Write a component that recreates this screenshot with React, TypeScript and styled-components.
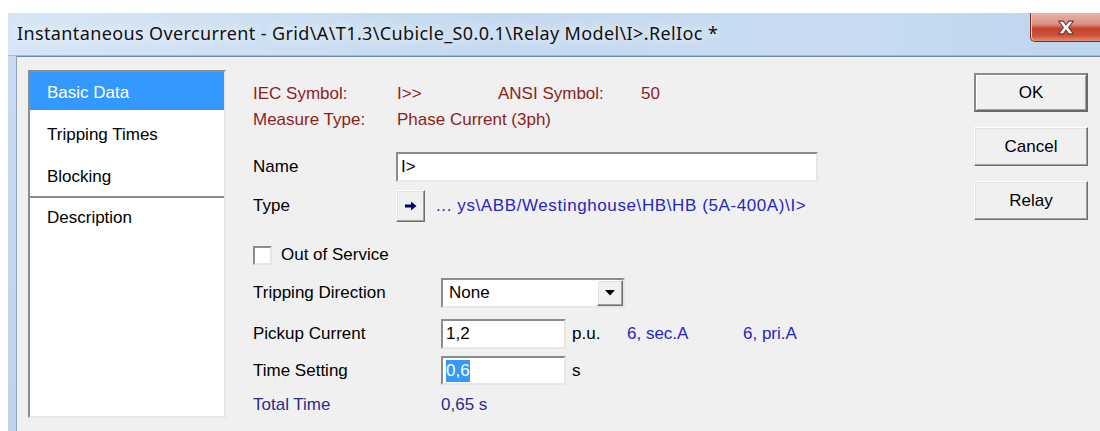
import React from 'react';
import styled, { createGlobalStyle, css } from 'styled-components';

const GlobalStyle = createGlobalStyle`
  html, body {
    margin: 0;
    background: #ffffff;
    overflow: hidden;
  }
  body {
    font-family: "Liberation Sans", Arial, sans-serif;
    font-size: 17px;
    color: #000;
  }
`;

const sunken = css`
  box-sizing: border-box;
  border: 2px solid;
  border-color: #8c8c8c #e6e6e6 #e6e6e6 #8c8c8c;
  background: #fff;
`;

const raised = css`
  box-sizing: border-box;
  border: 1px solid;
  border-color: #ffffff #6e6e6e #6e6e6e #ffffff;
  box-shadow: inset -1px -1px 0 #a0a0a0, inset 1px 1px 0 #e3e3e3;
  background: #f0f0f0;
`;

const Window = styled.div`
  margin: 13px 0 0 8px;
  height: 418px;
  display: flex;
  flex-direction: column;
  background: linear-gradient(180deg, #c9ddf2, #bcd4ee);
`;

const TitleBar = styled.div`
  box-sizing: border-box;
  height: 43px;
  display: flex;
  align-items: flex-start;
  background: linear-gradient(90deg, #d7e6f6 0%, #c4d9f0 45%, #c9dcf2 75%, #bed5ee 100%);
  border-bottom: 1px solid #a3b9d2;
`;

const Title = styled.div`
  padding: 8px 0 0 9px;
  font-family: "Noto Sans", "Open Sans", sans-serif;
  font-size: 18px;
  letter-spacing: 0.38px;
  line-height: 24px;
  color: #111;
  white-space: nowrap;
  text-shadow: 0 0 8px #eef4fb, 0 0 12px #eef4fb;
`;

const CloseButton = styled.div`
  box-sizing: border-box;
  margin-left: auto;
  width: 70px;
  height: 29px;
  display: flex;
  align-items: center;
  justify-content: center;
  border: 1px solid #7a2d22;
  border-top: none;
  border-right: none;
  border-bottom-left-radius: 5px;
  background: linear-gradient(180deg, #eab4a8 0%, #dc9282 40%, #c5432c 55%, #cc5138 80%, #e08f78 100%);
  box-shadow: inset 1px 0 0 #f2c8bd;
`;

const Client = styled.div`
  flex: 1;
  margin-left: 8px;
  background: #f0f0f0;
  border-top: 1px solid #7089a6;
  border-left: 1px solid #8fa4bc;
  padding: 13px 12px 0 11px;
  display: grid;
  grid-template-columns: 198px 1fr 114px;
  align-items: start;
`;

const Tree = styled.div`
  ${sunken};
  height: 348px;
  display: flex;
  flex-direction: column;
`;

const TreeGroup = styled.div<{ $split?: boolean }>`
  height: ${p => (p.$split ? 'auto' : '124px')};
  overflow: hidden;
  ${p => p.$split && css`border-top: 2px solid #8c8c8c;`}
`;

const TreeItem = styled.div<{ $selected?: boolean; $h?: number }>`
  height: ${p => p.$h ?? 42}px;
  display: flex;
  align-items: center;
  padding-left: 17px;
  color: ${p => (p.$selected ? '#fff' : '#000')};
  background: ${p => (p.$selected ? 'linear-gradient(#3399ff 0 38px, transparent 38px)' : 'none')};
`;

const Form = styled.div`
  margin: 11px 0 0 27px;
  display: flex;
  flex-direction: column;
`;

const Row = styled.div<{ $h: number; $gap?: number }>`
  height: ${p => p.$h}px;
  margin-top: ${p => p.$gap ?? 0}px;
  display: flex;
  align-items: center;
  white-space: nowrap;
`;

const Cell = styled.span<{ $w?: number; $pad?: number; $tone?: 'info' | 'link' | 'total' }>`
  box-sizing: border-box;
  ${p => p.$w && css`width: ${p.$w}px; flex: none;`}
  padding-left: ${p => p.$pad ?? 0}px;
  color: ${p =>
    p.$tone === 'info' ? '#8e1d1d' : p.$tone === 'link' ? '#2626c2' : p.$tone === 'total' ? '#2b2b8c' : '#000'};
`;

const PathLink = styled.span`
  color: #2626c2;
  letter-spacing: 0.6px;
`;

const TextBox = styled.div<{ $w: number; $h?: number }>`
  ${sunken};
  width: ${p => p.$w}px;
  height: ${p => p.$h ?? 30}px;
  padding-left: 3px;
  display: flex;
  align-items: center;
`;

const Selected = styled.span`
  background: #3399ff;
  color: #fff;
  line-height: 22px;
`;

const ArrowButton = styled.div`
  ${raised};
  width: 29px;
  height: 32px;
  display: flex;
  align-items: center;
  justify-content: center;
  margin-right: 11px;
`;

const Check = styled.div`
  ${sunken};
  width: 19px;
  height: 19px;
  margin-right: 9px;
`;

const Select = styled.div`
  ${sunken};
  width: 184px;
  height: 30px;
  display: flex;
  align-items: center;
  padding-left: 6px;
  justify-content: space-between;
`;

const DropButton = styled.div`
  ${raised};
  width: 26px;
  height: 26px;
  display: flex;
  align-items: center;
  justify-content: center;
`;

const Buttons = styled.div`
  margin-top: 3px;
  display: flex;
  flex-direction: column;
  gap: 15px;
`;

const Button = styled.div<{ $default?: boolean }>`
  ${raised};
  height: 39px;
  display: flex;
  align-items: center;
  justify-content: center;
  ${p =>
    p.$default &&
    css`
      border: 2px solid #6a6a6a;
      border-top-color: #8a8a8a;
      border-left-color: #8a8a8a;
      box-shadow: inset 1px 1px 0 #fff, inset -1px -1px 0 #a0a0a0;
    `}
`;

const CloseGlyph = () => (
  <svg width="22" height="17" viewBox="0 0 20 16">
    <path
      d="M3 2h4.5L10 5.6 12.5 2H17l-4.6 6L17 14h-4.5L10 10.4 7.5 14H3l4.6-6z"
      fill="#ffffff"
      stroke="#6a3a33"
      strokeWidth="1"
      strokeLinejoin="round"
    />
  </svg>
);

const RightArrow = () => (
  <svg width="12" height="10" viewBox="0 0 12 10">
    <path d="M0 3.5h6V0.5L11.5 5 6 9.5V6.5H0z" fill="#00006e" />
  </svg>
);

const DownTriangle = () => (
  <svg width="10" height="6" viewBox="0 0 10 6">
    <path d="M0 0h10L5 5.5z" fill="#000" />
  </svg>
);

export default function App() {
  return (
    <>
      <GlobalStyle />
      <Window>
        <TitleBar>
          <Title>Instantaneous Overcurrent - Grid\A\T1.3\Cubicle_S0.0.1\Relay Model\I&gt;.RelIoc *</Title>
          <CloseButton>
            <CloseGlyph />
          </CloseButton>
        </TitleBar>
        <Client>
          <Tree>
            <TreeGroup>
              <TreeItem $selected>Basic Data</TreeItem>
              <TreeItem>Tripping Times</TreeItem>
              <TreeItem>Blocking</TreeItem>
            </TreeGroup>
            <TreeGroup $split>
              <TreeItem $h={40}>Description</TreeItem>
            </TreeGroup>
          </Tree>

          <Form>
            <Row $h={26}>
              <Cell $w={144} $tone="info">IEC Symbol:</Cell>
              <Cell $w={101} $tone="info">I&gt;&gt;</Cell>
              <Cell $w={143} $tone="info">ANSI Symbol:</Cell>
              <Cell $tone="info">50</Cell>
            </Row>
            <Row $h={26}>
              <Cell $w={144} $tone="info">Measure Type:</Cell>
              <Cell $tone="info">Phase Current (3ph)</Cell>
            </Row>
            <Row $h={30} $gap={19}>
              <Cell $w={143}>Name</Cell>
              <TextBox $w={422}>I&gt;</TextBox>
            </Row>
            <Row $h={32} $gap={8}>
              <Cell $w={143}>Type</Cell>
              <ArrowButton>
                <RightArrow />
              </ArrowButton>
              <PathLink>... ys\ABB/Westinghouse\HB\HB (5A-400A)\I&gt;</PathLink>
            </Row>
            <Row $h={24} $gap={21}>
              <Check />
              <Cell>Out of Service</Cell>
            </Row>
            <Row $h={30} $gap={11}>
              <Cell $w={188}>Tripping Direction</Cell>
              <Select>
                None
                <DropButton>
                  <DownTriangle />
                </DropButton>
              </Select>
            </Row>
            <Row $h={30} $gap={11}>
              <Cell $w={188}>Pickup Current</Cell>
              <TextBox $w={125}>1,2</TextBox>
              <Cell $w={61} $pad={6}>p.u.</Cell>
              <Cell $w={116} $tone="link">6, sec.A</Cell>
              <Cell $tone="link">6, pri.A</Cell>
            </Row>
            <Row $h={29} $gap={7}>
              <Cell $w={188}>Time Setting</Cell>
              <TextBox $w={125} $h={29}>
                <Selected>0,6</Selected>
              </TextBox>
              <Cell $pad={6}>s</Cell>
            </Row>
            <Row $h={24} $gap={8}>
              <Cell $w={188} $tone="total">Total Time</Cell>
              <Cell $tone="total">0,65 s</Cell>
            </Row>
          </Form>

          <Buttons>
            <Button $default>OK</Button>
            <Button>Cancel</Button>
            <Button>Relay</Button>
          </Buttons>
        </Client>
      </Window>
    </>
  );
}
